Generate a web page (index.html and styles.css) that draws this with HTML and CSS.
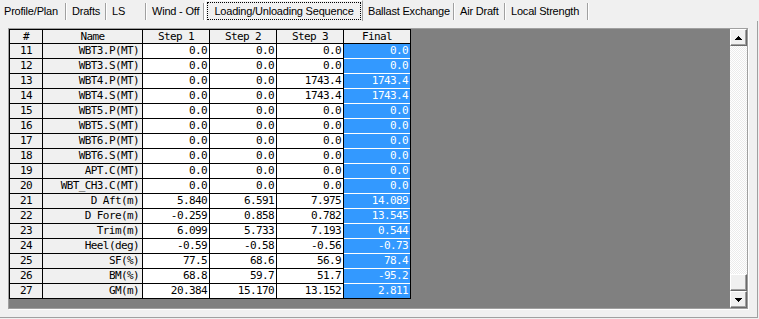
FILE: index.html
```html
<!DOCTYPE html>
<html lang="en">
<head>
  <meta charset="UTF-8">
  <title>Loading/Unloading Sequence</title>
  <link rel="stylesheet" href="styles.css">
</head>
<body>

  <!-- tab strip -->
  <div class="tabs">
    <div class="tab tab-profile">Profile/Plan</div>
    <div class="tab tab-drafts">Drafts</div>
    <div class="tab tab-ls">LS</div>
    <div class="tab tab-wind">Wind - Off</div>
    <div class="tab-active"><div class="tab-focus">Loading/Unloading Sequence</div></div>
    <div class="tab tab-ballast">Ballast Exchange</div>
    <div class="tab tab-air">Air Draft</div>
    <div class="tab tab-local">Local Strength</div>
  </div>

  <div class="panel">
    <div class="frame">
      <div class="area">
        <div class="grid">
          <div class="hd">#</div><div class="hd">Name</div><div class="hd">Step 1</div><div class="hd">Step 2</div><div class="hd">Step 3</div><div class="hd">Final</div>

          <div class="idx">11</div><div class="name">WBT3.P(MT)</div><div class="val">0.0</div><div class="val">0.0</div><div class="val">0.0</div><div class="fin">0.0</div>
          <div class="idx">12</div><div class="name">WBT3.S(MT)</div><div class="val">0.0</div><div class="val">0.0</div><div class="val">0.0</div><div class="fin">0.0</div>
          <div class="idx">13</div><div class="name">WBT4.P(MT)</div><div class="val">0.0</div><div class="val">0.0</div><div class="val">1743.4</div><div class="fin">1743.4</div>
          <div class="idx">14</div><div class="name">WBT4.S(MT)</div><div class="val">0.0</div><div class="val">0.0</div><div class="val">1743.4</div><div class="fin">1743.4</div>
          <div class="idx">15</div><div class="name">WBT5.P(MT)</div><div class="val">0.0</div><div class="val">0.0</div><div class="val">0.0</div><div class="fin">0.0</div>
          <div class="idx">16</div><div class="name">WBT5.S(MT)</div><div class="val">0.0</div><div class="val">0.0</div><div class="val">0.0</div><div class="fin">0.0</div>
          <div class="idx">17</div><div class="name">WBT6.P(MT)</div><div class="val">0.0</div><div class="val">0.0</div><div class="val">0.0</div><div class="fin">0.0</div>
          <div class="idx">18</div><div class="name">WBT6.S(MT)</div><div class="val">0.0</div><div class="val">0.0</div><div class="val">0.0</div><div class="fin">0.0</div>
          <div class="idx">19</div><div class="name">APT.C(MT)</div><div class="val">0.0</div><div class="val">0.0</div><div class="val">0.0</div><div class="fin">0.0</div>
          <div class="idx">20</div><div class="name">WBT_CH3.C(MT)</div><div class="val">0.0</div><div class="val">0.0</div><div class="val">0.0</div><div class="fin">0.0</div>
          <div class="idx">21</div><div class="name">D Aft(m)</div><div class="val">5.840</div><div class="val">6.591</div><div class="val">7.975</div><div class="fin">14.089</div>
          <div class="idx">22</div><div class="name">D Fore(m)</div><div class="val">-0.259</div><div class="val">0.858</div><div class="val">0.782</div><div class="fin">13.545</div>
          <div class="idx">23</div><div class="name">Trim(m)</div><div class="val">6.099</div><div class="val">5.733</div><div class="val">7.193</div><div class="fin">0.544</div>
          <div class="idx">24</div><div class="name">Heel(deg)</div><div class="val">-0.59</div><div class="val">-0.58</div><div class="val">-0.56</div><div class="fin">-0.73</div>
          <div class="idx">25</div><div class="name">SF(%)</div><div class="val">77.5</div><div class="val">68.6</div><div class="val">56.9</div><div class="fin">78.4</div>
          <div class="idx">26</div><div class="name">BM(%)</div><div class="val">68.8</div><div class="val">59.7</div><div class="val">51.7</div><div class="fin">-95.2</div>
          <div class="idx">27</div><div class="name">GM(m)</div><div class="val">20.384</div><div class="val">15.170</div><div class="val">13.152</div><div class="fin fin-last">2.811</div>
        </div>
      </div>

      <!-- vertical scroll bar -->
      <div class="scroll">
        <div class="scroll-btn">
          <svg width="7" height="4" viewBox="0 0 7 4"><path d="M3 0h1v1h1v1h1v1h1v1H0V3h1V2h1V1h1z" fill="#000"/></svg>
        </div>
        <div class="track"></div>
        <div class="scroll-btn"></div>
        <div class="scroll-btn">
          <svg width="7" height="4" viewBox="0 0 7 4"><path d="M0 0h7v1H6v1H5v1H4v1H3V3H2V2H1V1H0z" fill="#000"/></svg>
        </div>
      </div>
    </div>
  </div>

</body>
</html>
```

FILE: styles.css
```css
* {
  box-sizing: border-box;
}
body {
  margin: 0;
  width: 759px;
  height: 319px;
  overflow: hidden;
  background-color: #f0f0f0;
  color: #000;
  font-family: "Liberation Sans", Arial, sans-serif;
}

/* tabs */
.tabs {
  display: flex;
  height: 21px;
}
.tab {
  margin-top: 3px;
  height: 17px;
  padding-top: 2px;
  font-size: 11px;
  line-height: 13px;
  letter-spacing: -0.2px;
  white-space: nowrap;
  border-right: 1px solid #a0a0a0;
  box-shadow: 1px 0 0 #fff;
}
.tab-profile { width: 66px; padding-left: 4px; }
.tab-drafts { width: 40px; padding-left: 6px; }
.tab-ls { width: 40px; padding-left: 6px; }
.tab-wind { width: 58px; padding-left: 6px; }
.tab-ballast { width: 91px; padding-left: 5px; }
.tab-air { width: 51px; padding-left: 6px; }
.tab-local { width: 83px; padding-left: 6px; }
.tab-active {
  margin-left: 1px;
  width: 158px;
  height: 21px;
  padding: 1px;
  border-top: 1px solid #fff;
  border-left: 1px solid #fff;
  border-right: 1px solid #a0a0a0;
  font-size: 11px;
  letter-spacing: -0.2px;
}
.tab-focus {
  height: 18px;
  padding-top: 2px;
  border: 1px dotted #000;
  line-height: 13px;
  text-align: center;
  white-space: nowrap;
}

/* panel + grid frame */
.panel {
  width: 758px;
  height: 297px;
  padding: 7px 0 0 8px;
  border-right: 1px solid #a0a0a0;
  border-bottom: 1px solid #a0a0a0;
}
.frame {
  display: flex;
  width: 740px;
  height: 281px;
  border: 1px solid #a0a0a0;
  box-shadow: 1px 1px 0 #fff;
}
.area {
  flex: 1;
  background-color: #808080;
}

/* table */
.grid {
  display: grid;
  grid-template-columns: 32px 99px 66px 66px 66px 66px;
  grid-template-rows: 13px repeat(17, 14px);
  gap: 1px;
  padding: 1px;
  width: max-content;
  background-color: #000;
  font-family: "DejaVu Sans Mono", "Liberation Mono", monospace;
  font-size: 11px;
  letter-spacing: -0.6px;
}
.grid > div {
  line-height: 14px;
  white-space: nowrap;
  overflow: hidden;
}
.grid > .hd {
  background-color: #f0f0f0;
  text-align: center;
  line-height: 13px;
}
.idx {
  background-color: #f0f0f0;
  text-align: center;
}
.name {
  background-color: #f0f0f0;
  text-align: right;
  padding-right: 3px;
}
.val {
  background-color: #fff;
  text-align: right;
  padding-right: 2px;
}
.fin {
  background-color: #3399ff;
  color: #fff;
  text-align: right;
  padding-right: 2px;
  box-shadow: 0 1px 0 #fff;
}
.fin-last {
  box-shadow: none;
}

/* scroll bar */
.scroll {
  width: 17px;
  display: flex;
  flex-direction: column;
}
.scroll-btn {
  height: 17px;
  flex-shrink: 0;
  display: flex;
  align-items: center;
  justify-content: center;
  background-color: #f0f0f0;
  border: 1px solid;
  border-color: #fff #696969 #696969 #fff;
  box-shadow: inset -1px -1px 0 #a0a0a0;
}
.track {
  flex: 1;
  background: repeating-conic-gradient(#fff 0 25%, #ebebeb 0 50%) 0 0 / 2px 2px;
}
```
